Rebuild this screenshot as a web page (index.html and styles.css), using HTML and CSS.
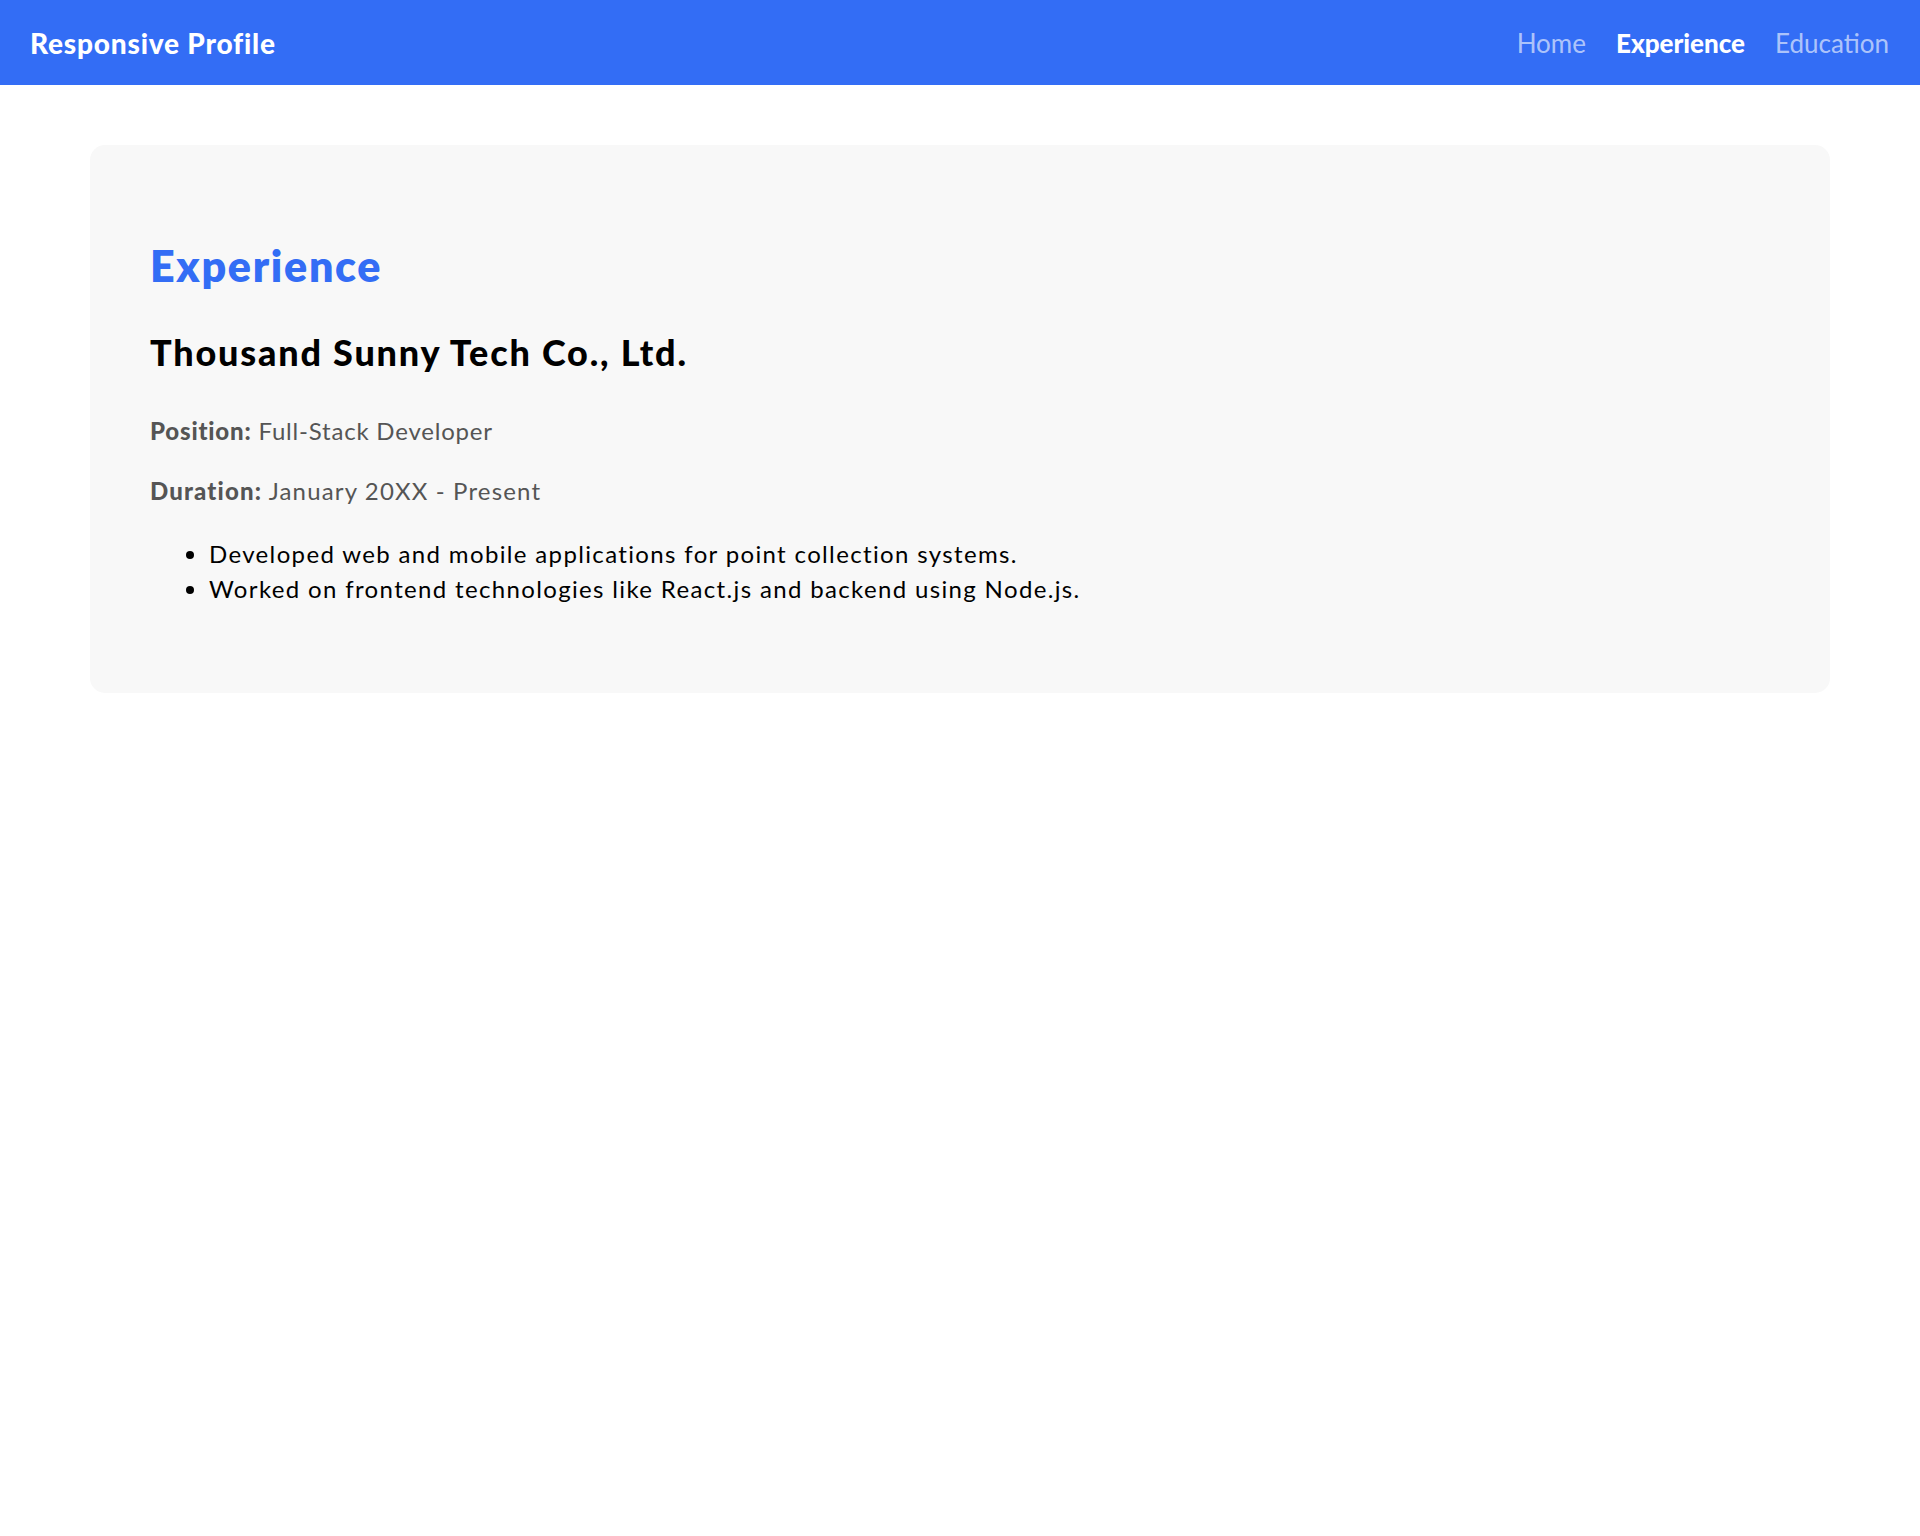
FILE: index.html
```html
<!DOCTYPE html>
<html lang="en">
<head>
<meta charset="utf-8">
<title>Responsive Profile</title>
<link rel="stylesheet" href="styles.css">
</head>
<body>
<header class="topbar">
  <div class="brand">Responsive Profile</div>
  <nav class="nav">
    <a class="nav-link" href="#">Home</a>
    <a class="nav-link active" href="#">Experience</a>
    <a class="nav-link" href="#">Education</a>
  </nav>
</header>
<main class="main">
  <section class="card">
    <h2 class="section-title">Experience</h2>
    <h3 class="company">Thousand Sunny Tech Co., Ltd.</h3>
    <p class="meta"><strong>Position:</strong> Full-Stack Developer</p>
    <p class="meta meta-second"><strong>Duration:</strong> January 20XX - Present</p>
    <ul class="duties">
      <li>Developed web and mobile applications for point collection systems.</li>
      <li>Worked on frontend technologies like React.js and backend using Node.js.</li>
    </ul>
  </section>
</main>
</body>
</html>
```
FILE: styles.css
```css
* { box-sizing: border-box; }
html, body { margin: 0; padding: 0; background: #ffffff; }
body {
  font-family: "Lato", "Open Sans", sans-serif;
  color: #000;
}
.topbar {
  height: 85px;
  background: #336df5;
  display: flex;
  align-items: center;
  justify-content: space-between;
  padding: 0 31px 0 30px;
}
.brand {
  color: #fff;
  font-size: 28px;
  font-weight: 900;
  letter-spacing: 0.8px;
}
.nav {
  display: flex;
  gap: 30px;
}
.nav-link {
  color: rgba(255,255,255,0.62);
  text-decoration: none;
  font-size: 26px;
}
.nav-link.active {
  color: #fff;
  font-weight: 900;
}
.main {
  padding: 60px 90px;
}
.card {
  background: #f8f8f8;
  border-radius: 15px;
  padding: 60px 60px 60px 60px;
}
.section-title {
  color: #336df5;
  font-size: 43px;
  font-weight: 800;
  line-height: 1.2;
  letter-spacing: 1.7px;
  margin: 35px 0 0;
}
.company {
  font-size: 36px;
  font-weight: 900;
  line-height: 1.2;
  letter-spacing: 1.8px;
  margin: 39px 0 0;
}
.meta {
  font-size: 24px;
  line-height: 36px;
  color: #555;
  letter-spacing: 0.8px;
  margin: 39px 0 0;
}
.meta strong { font-weight: 900; }
.meta-second { margin-top: 24px; letter-spacing: 1.15px; }
.duties {
  margin: 27px 0 27px;
  padding-left: 59px;
  font-size: 24px;
  line-height: 35px;
  letter-spacing: 1.35px;
}
```
